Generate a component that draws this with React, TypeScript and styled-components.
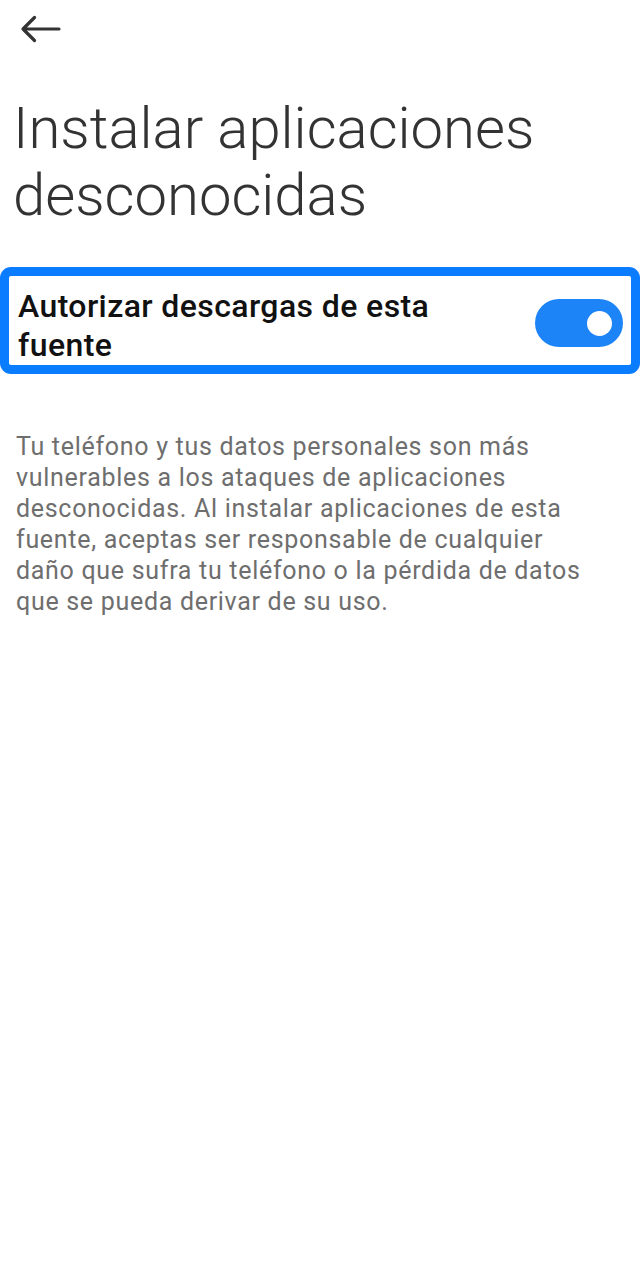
import React, { useState } from "react";
import styled, { createGlobalStyle } from "styled-components";

const Global = createGlobalStyle`
  html, body { margin: 0; padding: 0; background: #ffffff; }
  body { font-family: Roboto, "Noto Sans", "Liberation Sans", sans-serif; }
  * { box-sizing: border-box; }
`;

const Screen = styled.div`
  width: 640px;
  min-height: 1280px;
  background: #ffffff;
  display: flex;
  flex-direction: column;
`;

const TopBar = styled.div`
  height: 58px;
  display: flex;
  align-items: flex-start;
  padding: 13px 0 0 18px;
`;

const BackButton = styled.button`
  border: none;
  background: transparent;
  padding: 0;
  margin: 0;
  width: 44px;
  height: 32px;
  display: flex;
  cursor: pointer;
`;

const Title = styled.h1`
  margin: 37px 0 0 0;
  padding: 0 13px;
  font-family: Roboto, "Noto Sans", sans-serif;
  font-weight: 300;
  font-size: 58px;
  line-height: 67px;
  color: #333333;
`;

const OptionRow = styled.div`
  margin-top: 38px;
  border: 9px solid #0a7cff;
  border-radius: 11px;
  display: flex;
  align-items: flex-start;
  justify-content: space-between;
  padding: 11px 8px 0 9px;
`;

const OptionLabel = styled.div`
  font-family: Roboto, "Noto Sans", sans-serif;
  font-weight: 500;
  font-size: 32px;
  line-height: 39px;
  color: #111111;
  letter-spacing: 0.4px;
  max-width: 450px;
`;

const Track = styled.button<{ $on: boolean }>`
  width: 88px;
  height: 48px;
  border-radius: 24px;
  border: none;
  padding: 0;
  background: ${(p) => (p.$on ? "#1c84f6" : "#c8c8c8")};
  position: relative;
  cursor: pointer;
  flex-shrink: 0;
  margin-top: 12px;
`;

const Knob = styled.span<{ $on: boolean }>`
  position: absolute;
  top: 12px;
  left: ${(p) => (p.$on ? "52px" : "12px")};
  width: 25px;
  height: 25px;
  border-radius: 50%;
  background: #ffffff;
  transition: left 0.2s;
`;

const Description = styled.p`
  margin: 57px 0 0 0;
  padding: 0 40px 0 16px;
  font-family: Roboto, "Noto Sans", sans-serif;
  font-weight: 400;
  font-size: 25px;
  line-height: 31px;
  color: #6e6e6e;
  letter-spacing: 0.7px;
`;

export default function App() {
  const [on, setOn] = useState(true);
  return (
    <>
      <Global />
      <Screen>
        <TopBar>
          <BackButton aria-label="Atrás">
            <svg width="44" height="32" viewBox="0 0 44 32" fill="none">
              <path
                d="M5 16H41M16.5 4.5L5 16L16.5 27.5"
                stroke="#333333"
                strokeWidth="3.2"
                strokeLinecap="round"
                strokeLinejoin="round"
              />
            </svg>
          </BackButton>
        </TopBar>
        <Title>Instalar aplicaciones desconocidas</Title>
        <OptionRow>
          <OptionLabel>Autorizar descargas de esta fuente</OptionLabel>
          <Track $on={on} onClick={() => setOn(!on)} aria-pressed={on}>
            <Knob $on={on} />
          </Track>
        </OptionRow>
        <Description>
          Tu teléfono y tus datos personales son más vulnerables a los ataques de
          aplicaciones desconocidas. Al instalar aplicaciones de esta fuente,
          aceptas ser responsable de cualquier daño que sufra tu teléfono o la
          pérdida de datos que se pueda derivar de su uso.
        </Description>
      </Screen>
    </>
  );
}
